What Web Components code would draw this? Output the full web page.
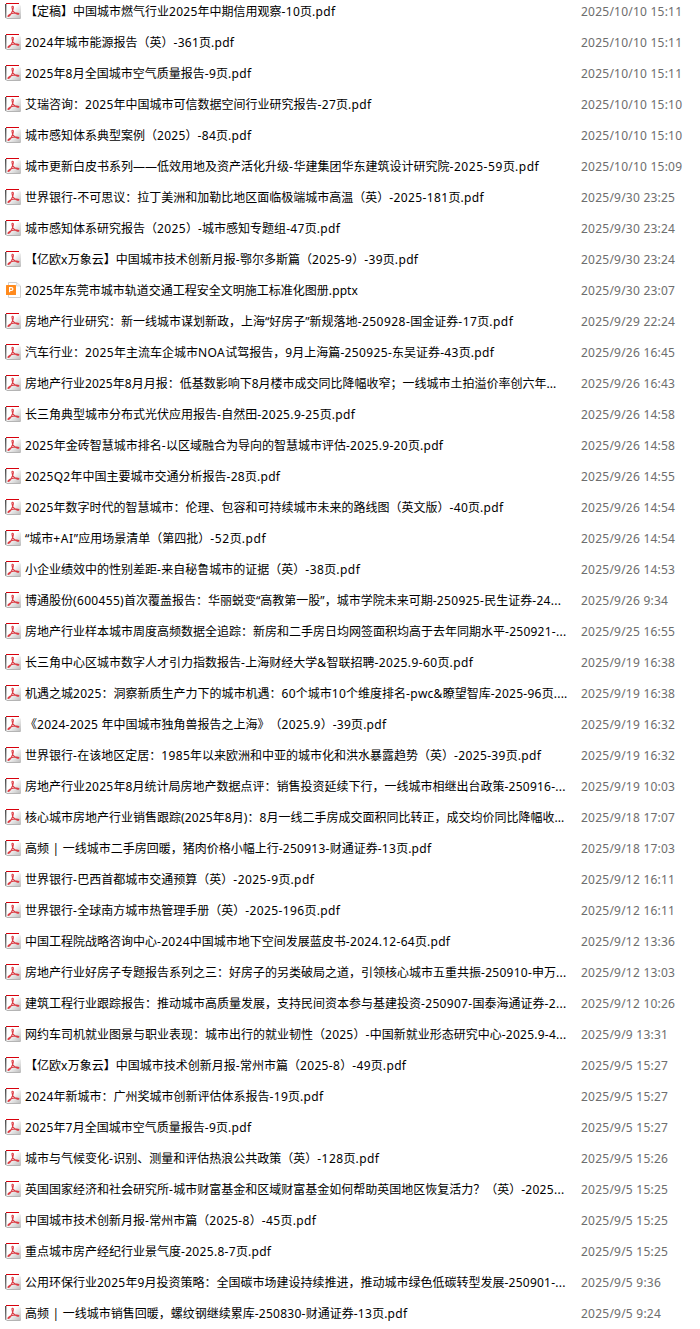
<!DOCTYPE html>
<html lang="zh-CN">
<head>
<meta charset="utf-8">
<title>文件列表</title>
<style>
html,body{margin:0;background:#fff}
body{height:1329px;overflow:hidden;font:12px/31px "Noto Sans","Noto Sans CJK SC",sans-serif;color:#000}
</style>
</head>
<body>
<file-list></file-list>
<script>
const FILES = `【定稿】中国城市燃气行业2025年中期信用观察-10页.pdf\t2025/10/10 15:11\t335.3
2024年城市能源报告（英）-361页.pdf\t2025/10/10 15:11\t234.3
2025年8月全国城市空气质量报告-9页.pdf\t2025/10/10 15:11\t251.3
艾瑞咨询：2025年中国城市可信数据空间行业研究报告-27页.pdf\t2025/10/10 15:10\t371.3
城市感知体系典型案例（2025）-84页.pdf\t2025/10/10 15:10\t251.3
城市更新白皮书系列——低效用地及资产活化升级-华建集团华东建筑设计研究院-2025-59页.pdf\t2025/10/10 15:09\t539.3
世界银行-不可思议：拉丁美洲和加勒比地区面临极端城市高温（英）-2025-181页.pdf\t2025/9/30 23:25\t484
城市感知体系研究报告（2025）-城市感知专题组-47页.pdf\t2025/9/30 23:24\t340.3
【亿欧x万象云】中国城市技术创新月报-鄂尔多斯篇（2025-9）-39页.pdf\t2025/9/30 23:24\t418.3
2025年东莞市城市轨道交通工程安全文明施工标准化图册.pptx\t2025/9/30 23:07\t358
房地产行业研究：新一线城市谋划新政，上海“好房子”新规落地-250928-国金证券-17页.pdf\t2025/9/29 22:24\t513.3
汽车行业：2025年主流车企城市NOA试驾报告，9月上海篇-250925-东吴证券-43页.pdf\t2025/9/26 16:45\t494.3
房地产行业2025年8月月报：低基数影响下8月楼市成交同比降幅收窄；一线城市土拍溢价率创六年...\t2025/9/26 16:43\t556.4
长三角典型城市分布式光伏应用报告-自然田-2025.9-25页.pdf\t2025/9/26 14:58\t355.3
2025年金砖智慧城市排名-以区域融合为导向的智慧城市评估-2025.9-20页.pdf\t2025/9/26 14:58\t443.3
2025Q2年中国主要城市交通分析报告-28页.pdf\t2025/9/26 14:55\t280.3
2025年数字时代的智慧城市：伦理、包容和可持续城市未来的路线图（英文版）-40页.pdf\t2025/9/26 14:54\t503.3
“城市+AI”应用场景清单（第四批）-52页.pdf\t2025/9/26 14:54\t266.3
小企业绩效中的性别差距-来自秘鲁城市的证据（英）-38页.pdf\t2025/9/26 14:53\t360.3
博通股份(600455)首次覆盖报告：华丽蜕变“高教第一股”，城市学院未来可期-250925-民生证券-24...\t2025/9/26 9:34\t561.4
房地产行业样本城市周度高频数据全追踪：新房和二手房日均网签面积均高于去年同期水平-250921-...\t2025/9/25 16:55\t566.4
长三角中心区城市数字人才引力指数报告-上海财经大学&智联招聘-2025.9-60页.pdf\t2025/9/19 16:38\t473.3
机遇之城2025：洞察新质生产力下的城市机遇：60个城市10个维度排名-pwc&瞭望智库-2025-96页....\t2025/9/19 16:38\t567.6
《2024-2025 年中国城市独角兽报告之上海》（2025.9）-39页.pdf\t2025/9/19 16:32\t386.3
世界银行-在该地区定居：1985年以来欧洲和中亚的城市化和洪水暴露趋势（英）-2025-39页.pdf\t2025/9/19 16:32\t541.3
房地产行业2025年8月统计局房地产数据点评：销售投资延续下行，一线城市相继出台政策-250916-...\t2025/9/19 10:03\t565.6
核心城市房地产行业销售跟踪(2025年8月)：8月一线二手房成交面积同比转正，成交均价同比降幅收...\t2025/9/18 17:07\t564.4
高频 | 一线城市二手房回暖，猪肉价格小幅上行-250913-财通证券-13页.pdf\t2025/9/18 17:03\t431.3
世界银行-巴西首都城市交通预算（英）-2025-9页.pdf\t2025/9/12 16:11\t314.3
世界银行-全球南方城市热管理手册（英）-2025-196页.pdf\t2025/9/12 16:11\t340.3
中国工程院战略咨询中心-2024中国城市地下空间发展蓝皮书-2024.12-64页.pdf\t2025/9/12 13:36\t450.3
房地产行业好房子专题报告系列之三：好房子的另类破局之道，引领核心城市五重共振-250910-申万...\t2025/9/12 13:03\t566.5
建筑工程行业跟踪报告：推动城市高质量发展，支持民间资本参与基建投资-250907-国泰海通证券-2...\t2025/9/12 10:26\t566.5
网约车司机就业图景与职业表现：城市出行的就业韧性（2025）-中国新就业形态研究中心-2025.9-4...\t2025/9/9 13:31\t566.5
【亿欧x万象云】中国城市技术创新月报-常州市篇（2025-8）-49页.pdf\t2025/9/5 15:27\t406.3
2024年新城市：广州奖城市创新评估体系报告-19页.pdf\t2025/9/5 15:27\t323.3
2025年7月全国城市空气质量报告-9页.pdf\t2025/9/5 15:27\t251.3
城市与气候变化-识别、测量和评估热浪公共政策（英）-128页.pdf\t2025/9/5 15:26\t379.3
英国国家经济和社会研究所-城市财富基金和区域财富基金如何帮助英国地区恢复活力？（英）-2025...\t2025/9/5 15:25\t564.4
中国城市技术创新月报-常州市篇（2025-8）-45页.pdf\t2025/9/5 15:25\t316.3
重点城市房产经纪行业景气度-2025.8-7页.pdf\t2025/9/5 15:25\t271.3
公用环保行业2025年9月投资策略：全国碳市场建设持续推进，推动城市绿色低碳转型发展-250901-...\t2025/9/5 9:36\t565.6
高频 | 一线城市销售回暖，螺纹钢继续累库-250830-财通证券-13页.pdf\t2025/9/5 9:24\t407.3`.split("\n").map(l => l.split("\t"));

const PDF = `<svg width="16" height="17" viewBox="0 0 16 17">
<defs><linearGradient id="g" x1="0" y1="0" x2="1" y2="1"><stop offset=".4" stop-color="#fff"/><stop offset="1" stop-color="#b8b8b8"/></linearGradient>
<linearGradient id="s" x1="0" y1="0" x2="0" y2="1"><stop offset="0" stop-color="#4a4a4a"/><stop offset="1" stop-color="#8c8c8c"/></linearGradient></defs>
<path d="M1 1H14L16 3V15Q16 16 15 16H1Z" fill="url(#g)"/>
<path d="M2 15H15V16H1.5Z" fill="#b4b4b4"/>
<path d="M0 1H1.4V15.5L0 14.5Z" fill="url(#s)"/>
<path d="M1 0H14V1H1Z" fill="#d8000c"/>
<path d="M7.4 3.2C8.9 3 8.4 5.3 7.6 7.5C6.6 10.1 4.6 13.3 3.3 13.5C2.2 13.4 4 11.5 6.1 10.8C8.5 10 12.9 9.5 13.9 10.5C14.3 11.8 11.2 11.3 9.5 9.7C7.8 8.1 6.8 5.7 6.9 4.1C6.9 3.6 7.1 3.3 7.4 3.2Z" fill="none" stroke="#dc3c44" stroke-width="1.05"/></svg>`;
const PPT = `<svg width="16" height="17" viewBox="0 0 16 17">
<path d="M3.5 .5H11.5L15.5 4V15.5H3.5Z" fill="#fff" stroke="#cfcfcf"/>
<path d="M11.5 .8V4H15.2" fill="#f3f3f3" stroke="#d4d4d4" stroke-width=".7"/>
<rect x="1" y="3" width="10" height="10" rx=".5" fill="#ff8a1d"/>
<path d="M4.6 10.3V5.7H6.4Q7.9 5.7 7.9 7.1T6.4 8.5H4.6" fill="none" stroke="#fff" stroke-width="1.2"/></svg>`;

class FileIcon extends HTMLElement {
  connectedCallback() {
    this.attachShadow({mode:"open"}).innerHTML =
      `<style>:host{display:block;width:16px;height:17px}svg{display:block}</style>` +
      (this.getAttribute("type") === "pptx" ? PPT : PDF);
  }
}
customElements.define("file-icon", FileIcon);

class FileRow extends HTMLElement {
  connectedCallback() {
    const root = this.attachShadow({mode:"open"});
    root.innerHTML = `<style>
:host{display:grid;grid-template-columns:16px 552px 1fr;column-gap:4px;padding-left:5px;height:31px;align-items:center;white-space:pre;text-spacing-trim:space-all;font-kerning:none}
.name{justify-self:start}
.name span{letter-spacing:var(--track,0)}
time{color:#6d6d6d;letter-spacing:.23px}
</style><file-icon type="${this.getAttribute("type")}"></file-icon><div class="name"></div><time><slot name="date"></slot></time>`;
    const name = root.querySelector(".name");
    let count = 0;
    for (const part of this.getAttribute("name").match(/[\x20-\x7e]+|[^\x20-\x7e]+/g)) {
      if (/^[\x20-\x7e]/.test(part)) {
        const s = document.createElement("span");
        s.textContent = part;
        count += part.length;
        name.append(s);
      } else name.append(part);
    }
    // Spread the Latin runs so the name fills its measure.
    const spare = +this.getAttribute("measure") - name.getBoundingClientRect().width;
    name.style.setProperty("--track", (spare / count).toFixed(3) + "px");
  }
}
customElements.define("file-row", FileRow);

class FileList extends HTMLElement {
  connectedCallback() {
    const root = this.attachShadow({mode:"open"});
    root.innerHTML = `<style>:host{display:flex;flex-direction:column;margin-top:-4px}</style>`;
    for (const [name, date, end] of FILES) {
      const row = document.createElement("file-row");
      row.setAttribute("name", name);
      row.setAttribute("type", name.endsWith("pptx") ? "pptx" : "pdf");
      row.setAttribute("measure", end - 25);
      const d = document.createElement("span");
      d.slot = "date";
      d.textContent = date;
      row.append(d);
      root.append(row);
    }
  }
}
customElements.define("file-list", FileList);
</script>
</body>
</html>
